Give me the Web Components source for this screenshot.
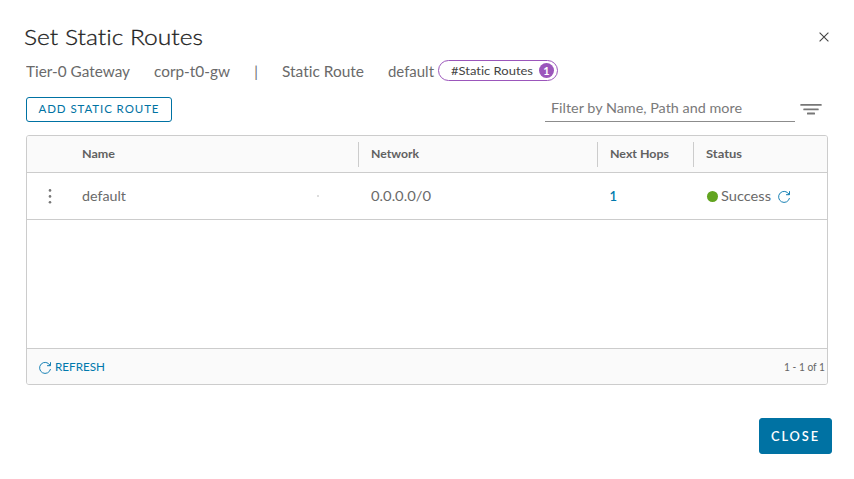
<!DOCTYPE html>
<html lang="en"><head><meta charset="utf-8"><title>Set Static Routes</title>
<style>
html,body{margin:0;height:100%;overflow:hidden;background:#fff}
body{font-family:Lato,"Open Sans",sans-serif;color:#6a6a6a;font-size:13px;font-variant-ligatures:none}
</style></head><body>
<routes-dialog></routes-dialog>
<script>
const define=(name,html,after)=>customElements.define(name,class extends HTMLElement{
  connectedCallback(){
    if(this.shadowRoot)return;
    const t=document.createElement('template');t.innerHTML=html;
    this.attachShadow({mode:'open'}).append(t.content.cloneNode(true));
    if(after)after(this,this.shadowRoot);
  }
});
/* A label that takes the given width: by wider letters, or by tracking when "track" is set. */
define('fit-label','<style>:host{display:inline-block;white-space:nowrap;flex:none}span{display:inline-block;white-space:pre;transform-origin:0 50%}</style><span><slot></slot></span>',(h,r)=>{
  const s=r.querySelector('span'),w=+h.getAttribute('w'),n=h.textContent.length;
  h.style.width=w+'px';
  const own=s.getBoundingClientRect().width;
  if(h.hasAttribute('track')) s.style.letterSpacing=((w-own)/Math.max(1,n-1))+'px';
  else s.style.transform='scaleX('+(w/own)+')';
});
define('refresh-icon',`<style>:host{display:block;flex:none;width:14px;height:14px;color:#1a82b5}svg{display:block}</style>
<svg width="14" height="14" viewBox="0 0 14 14" fill="none" stroke="currentColor" stroke-width="1"><path d="M11.9 4.2A5.5 5.5 0 1 0 12.5 8"/><path d="M12.5 1.2V4.7H9"/><path d="M12.5 2.4V4.7H10.2Z" fill="currentColor" stroke="none"/></svg>`);
define('close-icon',`<style>:host{display:block;width:10px;height:10px}svg{display:block}</style><svg width="10" height="10" fill="none" stroke="#444" stroke-width="1.1"><path d="M.6.6 9.4 9.4M9.4.6.6 9.4"/></svg>`);
define('filter-icon',`<style>:host{display:block;flex:none;width:22px;height:11px}svg{display:block}</style><svg width="22" height="11" fill="#777"><rect x=".3" y="0" width="21.4" height="1.8" rx=".5"/><rect x="3.3" y="4.5" width="15.4" height="1.8" rx=".5"/><rect x="7" y="8.6" width="8" height="1.8" rx=".5"/></svg>`);
define('menu-dots',`<style>:host{display:block;width:4px;height:15px}svg{display:block}</style><svg width="4" height="15" fill="#777"><circle cx="2" cy="1.4" r="1.3"/><circle cx="2" cy="7.4" r="1.3"/><circle cx="2" cy="13.2" r="1.3"/></svg>`);
define('action-button',`<style>:host{display:flex;box-sizing:border-box;align-items:center;justify-content:center;border-radius:3px;border:1px solid #0072a3;color:#0072a3;width:146px;height:25px;padding:0 1px 1px 0;font-size:11.5px;line-height:14px}
:host([primary]){background:#0072a3;color:#fff;width:73px;height:36px;padding:0 2px 0 0;font-size:12.8px;font-weight:600}</style><slot></slot>`);
define('route-tag',`<style>:host{display:flex;box-sizing:border-box;width:120px;height:21px;border:1px solid #9b56bb;border-radius:11px;align-items:center;padding:0 3px 0 12px;font-size:11.3px;color:#444;justify-content:space-between}
slot{display:block}
b{display:flex;width:15px;height:15px;border-radius:50%;background:#9b56bb;color:#fff;font-size:11px;line-height:15px;align-items:center;justify-content:center}</style><slot></slot><b>1</b>`);
define('search-field',`<style>:host{display:flex;box-sizing:border-box;width:250px;height:26px;border-bottom:1px solid #8c8c8c;padding:4px 6px 0;font-size:13.4px;line-height:17px;color:#7a7a7a}</style><slot></slot>`);
define('grid-head',`<style>:host{display:grid;grid-template-columns:331px 239px 96px 1fr;height:36px;background:#fafafa;border-bottom:1px solid #ccc;align-items:center;font-size:11.4px;font-weight:700;color:#616161}
div{height:25px;line-height:24px;box-sizing:border-box;border-left:1px solid #ccc;padding-left:12px}.first{border:0;padding-left:55px}</style>
<div class="first"><fit-label w="33">Name</fit-label></div><div><fit-label w="48">Network</fit-label></div><div><fit-label w="59">Next Hops</fit-label></div><div><fit-label w="36">Status</fit-label></div>`);
define('grid-row',`<style>:host{display:grid;grid-template-columns:55px 234px 42px 239px 96px 1fr;height:46px;border-bottom:1px solid #ccc;align-items:center;font-size:13.4px;line-height:18px}
div{padding-left:13px}fit-label{margin-bottom:1px}menu-dots{margin-left:21px}i{display:block;width:2px;height:2px;background:#ddd;margin-left:1px}
.link{color:#0079ad;font-weight:600;font-size:13px;padding-left:12.5px}.status{display:flex;align-items:center}.dot{width:11px;height:11px;border-radius:50%;background:#62a420;margin-right:3px;margin-left:.5px}refresh-icon{margin:1px 0 0 6px}</style>
<menu-dots></menu-dots><fit-label w="44">default</fit-label><i></i><div><fit-label w="60">0.0.0.0/0</fit-label></div><div class="link">1</div><div class="status"><span class="dot"></span><fit-label w="50">Success</fit-label><refresh-icon></refresh-icon></div>`);
define('grid-foot',`<style>:host{display:flex;box-sizing:border-box;height:36px;background:#fafafa;border-top:1px solid #ccc;align-items:center;padding:0 2px 0 11px;font-size:11.5px;color:#666}.r{color:#0079ad;margin-left:3px}.p{margin-left:auto}refresh-icon{margin-top:2px}</style>
<refresh-icon></refresh-icon><fit-label class="r" w="50">REFRESH</fit-label><fit-label class="p" w="41">1 - 1 of 1</fit-label>`);
define('route-grid',`<style>:host{display:flex;flex-direction:column;box-sizing:border-box;width:802px;height:250px;border:1px solid #ccc;border-radius:3px;overflow:hidden}.space{flex:1}</style>
<grid-head></grid-head><grid-row></grid-row><div class="space"></div><grid-foot></grid-foot>`);
define('routes-dialog',`<style>:host{display:flex;flex-direction:column;box-sizing:border-box;width:854px;height:479px;padding:22px 26px 25px}
.top{display:flex;align-items:center;justify-content:space-between;height:30px;margin-left:-2px}.title{font-size:22.3px;line-height:28px;color:#222;font-weight:300;-webkit-text-stroke:.3px #222;margin-bottom:1px}close-icon{margin:0 -1px 0 0}
.crumbs{display:flex;height:21px;margin-top:8px;font-size:14.6px;line-height:24px}.crumbs>*+*{margin-left:24px}.crumbs .sep{width:4px;text-align:center}.crumbs route-tag{margin:0 0 0 4px;line-height:18px}
.tools{display:flex;height:26px;margin-top:15px}.tools action-button{margin-top:1px}.tools search-field{margin-left:373px}.tools filter-icon{margin:8px 0 0 5px}
route-grid{margin-top:13px}.end{display:flex;justify-content:flex-end;margin:33px -4px 0 0}</style>
<div class="top"><fit-label class="title" w="179">Set Static Routes</fit-label><close-icon></close-icon></div>
<div class="crumbs"><fit-label w="104">Tier-0 Gateway</fit-label><fit-label w="76">corp-t0-gw</fit-label><span class="sep">|</span><fit-label w="82">Static Route</fit-label><fit-label w="46">default</fit-label><route-tag><fit-label w="82">#Static Routes</fit-label></route-tag></div>
<div class="tools"><action-button><fit-label track w="120">ADD STATIC ROUTE</fit-label></action-button><search-field><fit-label w="191">Filter by Name, Path and more</fit-label></search-field><filter-icon></filter-icon></div>
<route-grid></route-grid><div class="end"><action-button primary><fit-label track w="47">CLOSE</fit-label></action-button></div>`);
</script></body></html>
